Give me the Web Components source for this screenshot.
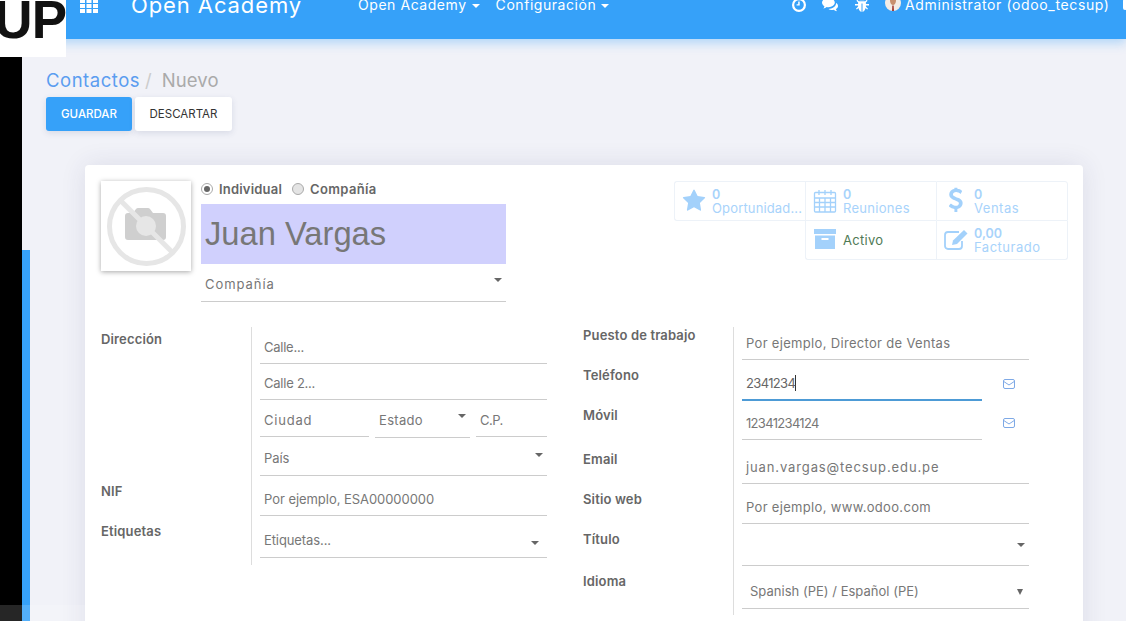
<!DOCTYPE html>
<html lang="es">
<head>
<meta charset="utf-8">
<title>Contactos / Nuevo</title>
<style>
  html, body { margin: 0; height: 621px; overflow: hidden; }
  body { font-family: Inter, "Noto Sans", sans-serif; font-size: 13px; color: #777; }
</style>
</head>
<body>
<x-app>
  <x-navbar slot="nav"></x-navbar>
  <x-breadcrumb slot="main"></x-breadcrumb>
  <x-toolbar slot="main"></x-toolbar>
  <x-sheet slot="main">
    <x-head>
      <x-photo slot="photo"></x-photo>
      <x-radios slot="title"></x-radios>
      <x-name slot="title">Juan Vargas</x-name>
      <x-field slot="title" style="height:38px;letter-spacing:.94px;padding-bottom:9px" caret="4" caret-y="14">Compañía</x-field>
      <x-stats slot="stats"></x-stats>
    </x-head>
    <x-form>
      <x-group slot="left" style="--tail:7px">
        <x-row label="Dirección" style="--lt:4px">
          <x-field style="height:37px;letter-spacing:-.25px">Calle...</x-field>
          <x-field style="height:36px;letter-spacing:-.24px">Calle 2...</x-field>
          <x-city></x-city>
          <x-field style="height:38px;letter-spacing:-.1px;padding-bottom:9px" caret="4" caret-y="15">País</x-field>
        </x-row>
        <x-row label="NIF" style="--lt:7px">
          <x-field style="height:40px;letter-spacing:-.05px">Por ejemplo, ESA00000000</x-field>
        </x-row>
        <x-row label="Etiquetas" style="--lt:7px">
          <x-field style="height:42px;letter-spacing:-.1px;padding-bottom:9px" caret="8" caret-y="25">Etiquetas...</x-field>
        </x-row>
      </x-group>
      <x-group slot="right" style="--tail:6px">
        <x-row label="Puesto de trabajo" style="--lt:0px">
          <x-field style="height:33px">Por ejemplo, Director de Ventas</x-field>
        </x-row>
        <x-row label="Teléfono" style="--lt:7px">
          <x-mail-line><x-field style="height:41px;letter-spacing:-.65px" active>2341234</x-field></x-mail-line>
        </x-row>
        <x-row label="Móvil" style="--lt:6px">
          <x-mail-line><x-field style="height:39px;letter-spacing:-.68px">12341234124</x-field></x-mail-line>
        </x-row>
        <x-row label="Email" style="--lt:11px">
          <x-field style="height:44px;letter-spacing:.88px">juan.vargas@tecsup.edu.pe</x-field>
        </x-row>
        <x-row label="Sitio web" style="--lt:7px">
          <x-field style="height:40px">Por ejemplo, www.odoo.com</x-field>
        </x-row>
        <x-row label="Título" style="--lt:7px">
          <x-field style="height:42px" caret="4" caret-y="19"></x-field>
        </x-row>
        <x-row label="Idioma" style="--lt:7px">
          <x-field style="height:43px;letter-spacing:.02px;padding-bottom:9px" indent tall>Spanish (PE) / Español (PE)</x-field>
        </x-row>
      </x-group>
    </x-form>
  </x-sheet>
</x-app>

<script>
const FA = {
  star: 'M1728 647q0 22-26 48l-363 354 86 500q1 7 1 20 0 21-10.5 35.5t-30.5 14.5q-19 0-40-12l-449-236-449 236q-22 12-40 12-21 0-31.5-14.5t-10.5-35.5q0-6 2-20l86-500-364-354q-25-27-25-48 0-37 56-46l502-73 225-455q19-41 49-41t49 41l225 455 502 73q56 9 56 46z',
  usd: 'M1158 1043q0 153-99.5 263.5t-258.5 136.5v175q0 14-9 23t-23 9h-135q-13 0-22.5-9.5t-9.5-22.5v-175q-66-9-127.5-31t-101.5-44.5-74-48-46.5-37.5-17.5-18q-17-21-2-41l103-135q7-10 23-12 15-2 24 9l2 2q113 99 243 125 37 8 74 8 81 0 142.5-43t61.5-122q0-28-15-53t-33.5-42-58.5-37.5-66-32-80-32.5q-39-16-61.5-25t-61.5-26.5-62.5-31-56.5-35.5-53.5-42.5-43.5-49-35.5-58-21-66.5-8.5-78q0-138 98-242t255-134v-180q0-13 9.5-22.5t22.5-9.5h135q14 0 23 9t9 23v176q57 6 110.5 23t87 33.5 63.5 37.5 39 29 15 14q17 18 5 38l-81 146q-8 15-23 16-14 3-27-7-3-3-14.5-12t-39-26.5-58.5-32-74.5-26-85.5-11.5q-95 0-155 43t-60 111q0 26 8.5 48t29.5 41.5 39.5 33 56 31 60.5 27 70 27.5q53 20 81 31.5t76 35 75.5 42.5 62 50 53 63.5 31.5 76.5 13 94z'
};

// small helper, every element here is the same shape: a shadow root with fixed markup
function define(name, html) {
  customElements.define(name, class extends HTMLElement {
    connectedCallback() {
      if (this.shadowRoot) return;
      this.attachShadow({ mode: 'open' }).innerHTML = typeof html === 'function' ? html(this) : html;
    }
  });
}

define('x-app', `
  <style>
    :host { display: grid; grid-template-rows: 39px 1fr; height: 621px; position: relative; overflow: hidden; background: #f1f2f8; }
    .body { display: flex; min-height: 0; }
    .black { width: 22px; background: #000; flex: none; }
    .strip { width: 8px; margin-top: 211px; background: #36a1f9; flex: none; }
    main { flex: 1; min-width: 0; padding: 28px 43px 0 16px; }
    .logo { position: absolute; left: 0; top: 0; width: 66px; height: 57px; background: #fff; overflow: hidden; z-index: 3; }
    .logo span { position: absolute; right: 0; top: -10px; font: 700 53px/60px "Liberation Sans", sans-serif; letter-spacing: -1px; color: #111; }
    .veil { position: absolute; left: 0; top: 605px; width: 232px; height: 16px; background: rgba(255,255,255,.15); z-index: 3; }
  </style>
  <slot name="nav"></slot>
  <div class="body">
    <div class="black"></div>
    <div class="strip"></div>
    <main><slot name="main"></slot></main>
  </div>
  <div class="logo"><span>UP</span></div>
  <div class="veil"></div>
`);

define('x-navbar', `
  <style>
    :host { display: block; height: 39px; background: #36a1f9; box-shadow: 0 4px 10px rgba(54,161,249,.35); position: relative; z-index: 2; color: #fff; }
    .row { display: flex; align-items: center; height: 9px; padding-left: 80px; font-size: 14px; white-space: nowrap; }
    .brand { font-size: 22px; margin: 0 56px 0 33px; letter-spacing: .9px; }
    .menu { margin-right: 16px; letter-spacing: .55px; }
    .menu i { display: inline-block; margin-left: 5px; vertical-align: 2px; border: 4px solid transparent; border-top-color: #fff; border-bottom: 0; }
    .right { position: absolute; left: 792px; top: 0; display: flex; align-items: center; height: 9px; font-size: 14px; white-space: nowrap; }
    svg { display: block; fill: #fff; flex: none; }
    .user { letter-spacing: .63px; margin-left: 4px; }
    .more { position: absolute; left: 331px; top: -1px; width: 4px; height: 11px; background: #fff; border-radius: 2px; }
  </style>
  <div class="row">
    <svg width="18" height="14" viewBox="0 0 18 14" style="margin-top:2px"><path d="M0 0h5v4H0zM6.5 0h5v4h-5zM13 0h5v4h-5zM0 5h5v4H0zM6.5 5h5v4h-5zM13 5h5v4h-5zM0 10h5v4H0zM6.5 10h5v4h-5zM13 10h5v4h-5z"/></svg>
    <span class="brand">Open Academy</span>
    <span class="menu">Open Academy<i></i></span>
    <span class="menu">Configuración<i></i></span>
  </div>
  <div class="right">
    <svg width="14" height="14" viewBox="0 0 14 14" style="margin-right:16px"><path fill-rule="evenodd" d="M7 0a7 7 0 1 1 0 14A7 7 0 0 1 7 0zm0 2.2a4.8 4.8 0 1 0 0 9.6 4.8 4.8 0 0 0 0-9.6z"/><path d="M6.2 3.6h1.5v4H4.6V6.2h1.6z"/></svg>
    <svg width="16" height="14" viewBox="0 0 16 14" style="margin-right:17px"><path d="M6.5 0C10 0 12.8 2 12.8 4.6S10 9.2 6.5 9.2c-.7 0-1.2 0-1.8-.2C3.800 9.700 2.700 10.200 1.300 10.400c.6-.7 1-1.400 1.100-2.200C.9 7.400 0 6.100 0 4.600 0 2 2.900 0 6.500 0z"/><path d="M14.100 5c1.200.7 1.900 1.800 1.900 3 0 1.300-.8 2.400-2.100 3.100.1.700.5 1.400 1.100 2.100-1.300-.2-2.500-.7-3.300-1.400-.5.1-1 .2-1.600.2-1.400 0-2.700-.4-3.600-1.100 3.700-.1 7.600-2 7.600-5.900z"/></svg>
    <svg width="14" height="14" viewBox="0 0 14 14" style="margin-right:16px"><path d="M4.500 2.300C4.800 1 5.800 0 7 0s2.200 1 2.500 2.300zM3.800 3.300h6.400l1.500-1.500.9.900L10.900 4.400v1.700H14v1.300h-3.100v1.100L13 10.700l-.9.900-1.500-1.500C10 12.300 8.800 14 7.500 14V5.500h-1V14c-1.300 0-2.500-1.700-3.100-3.900l-1.500 1.500-.9-.9 2.100-2.200V7.400H0V6.100h3.100V4.400L1.400 2.700l.9-.9z"/></svg>
    <svg width="16" height="16" viewBox="0 0 16 16" style="margin-top:-3px"><circle cx="8" cy="8" r="8" fill="#f3ece6"/><path d="M5 5.500C5 3 6.500 1.500 8 1.500S11 3 11 5.500 9.600 10 8 10 5 8 5 5.500z" fill="#c8906f"/><path d="M5 4.500C5.500 2 7 1 8 1s2.500 1 3 3.500c-1-.8-5-.8-6 0z" fill="#8a6350"/><path d="M7.300 10.500h1.400L9 16H7z" fill="#a33a32"/></svg>
    <span class="user">Administrator (odoo_tecsup)</span>
    <span class="more"></span>
  </div>
`);

define('x-breadcrumb', `
  <style>
    :host { display: flex; height: 26px; line-height: 26px; font-size: 18.5px; white-space: nowrap; }
    a { color: #5b9df0; letter-spacing: .52px; }
    .sep { color: #ccc; margin: 0 10px 0 5px; }
    .cur { color: #aaa; letter-spacing: .1px; }
  </style>
  <a>Contactos</a><span class="sep">/</span><span class="cur">Nuevo</span>
`);

define('x-toolbar', `
  <style>
    :host { display: flex; gap: 3px; margin-top: 4px; height: 34px; }
    button { font: 11.5px Inter, sans-serif; border: 0; border-radius: 3px; padding: 0 0 1px; box-shadow: 0 2px 6px rgba(60,70,120,.14); }
    .go { width: 86px; background: #36a1f9; color: #fff; font-weight: 500; }
    .no { width: 97px; background: #fff; color: #333; }
  </style>
  <button class="go">GUARDAR</button><button class="no">DESCARTAR</button>
`);

define('x-sheet', `
  <style>
    :host { display: block; box-sizing: border-box; margin: 34px 0 0 39px; height: 600px; padding: 16px 15px 0 16px; background: #fff; border-radius: 4px; box-shadow: 0 0 26px rgba(50,50,100,.11); }
  </style>
  <slot></slot>
`);

define('x-head', `
  <style>
    :host { display: flex; height: 121px; }
    .title { width: 305px; margin-left: 10px; display: flex; flex-direction: column; }
    .stats { margin-left: auto; }
  </style>
  <slot name="photo"></slot>
  <div class="title"><slot name="title"></slot></div>
  <div class="stats"><slot name="stats"></slot></div>
`);

define('x-photo', `
  <style>
    :host { display: block; width: 90px; height: 90px; flex: none; background: #fff; box-shadow: 0 1px 5px rgba(0,0,0,.35); }
    svg { display: block; }
  </style>
  <svg width="90" height="90" viewBox="0 0 90 90">
    <path fill="#cfcfcf" d="M24 35c0-2 1-3 3-3h5l3-4c.5-.7 1.200-1 2-1h10c.8 0 1.500.3 2 1l3 4h10c2 0 3 1 3 3v21c0 2-1 3-3 3H27c-2 0-3-1-3-3z"/>
    <circle cx="45" cy="45" r="10" fill="#e6e6e6"/>
    <circle cx="45.500" cy="45.500" r="37" fill="none" stroke="#e6e6e6" stroke-width="5"/>
    <path d="M19 19l53 53" stroke="#e6e6e6" stroke-width="5"/>
  </svg>
`);

define('x-radios', `
  <style>
    :host { display: flex; align-items: center; height: 23px; padding-bottom: 8px; box-sizing: border-box; font-weight: 600; font-size: 13px; color: #666; white-space: nowrap; }
    i { width: 12px; height: 12px; box-sizing: border-box; border-radius: 50%; border: 1px solid #aaa; background: #e4e4e4; margin-right: 6px; display: flex; align-items: center; justify-content: center; }
    .on { background: #fff; }
    .on::after { content: ""; width: 6px; height: 6px; border-radius: 50%; background: #666; }
    span { margin-right: 10px; letter-spacing: .2px; }
    span.b { letter-spacing: .35px; }
  </style>
  <i class="on"></i><span>Individual</span><i></i><span class="b">Compañía</span>
`);

define('x-name', `
  <style>
    :host { display: block; height: 60px; background: #d0d0fd; padding-left: 4px; font: 32.7px/60px "Liberation Sans", sans-serif; color: #777; flex: none; }
  </style>
  <slot></slot>
`);

define('x-field', el => {
  const caret = el.getAttribute('caret');
  const y = el.getAttribute('caret-y');
  const tall = el.hasAttribute('tall');
  return `
  <style>
    :host { display: flex; align-items: flex-end; position: relative; box-sizing: border-box; border-bottom: 1px solid #ccc; padding: 0 0 8px 4px; line-height: 16px; font-size: 13px; color: #777; letter-spacing: .32px; white-space: nowrap; flex: none; }
    :host([active]) { border-bottom: 2px solid #4d9bd6; padding-bottom: 8px; color: #666; }
    :host([active]) .t { border-right: 1px solid #333; }
    :host([indent]) { padding-left: 8px; }
    .c { position: absolute; right: ${caret || 0}px; top: ${y || 0}px; width: 0; height: 0; border: 4px solid transparent; border-top-color: #666; border-bottom: 0; }
    .tall { position: absolute; right: 6px; top: 23px; border: 3px solid transparent; border-top: 6px solid #666; border-bottom: 0; }
  </style>
  <span class="t"><slot></slot></span>
  ${caret ? '<i class="c"></i>' : ''}${tall ? '<i class="tall"></i>' : ''}`;
});

define('x-city', `
  <style>
    :host { display: flex; gap: 6px; height: 38px; align-items: flex-start; }
    x-field { flex: none; }
  </style>
  <x-field style="width:109px;height:37px;letter-spacing:.8px">Ciudad</x-field>
  <x-field style="width:95px;height:38px;padding-bottom:9px" caret="4" caret-y="14">Estado</x-field>
  <x-field style="width:71px;height:37px;letter-spacing:-.5px">C.P.</x-field>
`);

define('x-mail-line', `
  <style>
    :host { display: flex; align-items: flex-end; }
    ::slotted(x-field) { width: 240px; }
    svg { margin: 0 0 12px 21px; flex: none; }
  </style>
  <slot></slot>
  <svg width="12" height="10" viewBox="0 0 12 10" fill="none" stroke="#7ea9e6" stroke-width="1"><rect x=".5" y=".5" width="11" height="9" rx="1.500"/><path d="M.8 2.500 6 6l5.200-3.500"/></svg>
`);

define('x-form', `
  <style>
    :host { display: grid; grid-template-columns: 446px 446px; column-gap: 36px; margin-top: 25px; }
  </style>
  <slot name="left"></slot><slot name="right"></slot>
`);

define('x-group', `
  <style>
    :host { display: block; }
    .tail { height: var(--tail); width: 150px; border-right: 1px solid #ddd; }
  </style>
  <slot></slot><div class="tail"></div>
`);

define('x-row', el => `
  <style>
    :host { display: grid; grid-template-columns: 150px 296px; }
    label { padding-top: var(--lt); line-height: 16px; font-weight: 600; font-size: 13px; letter-spacing: .15px; color: #666; white-space: nowrap; }
    .v { box-sizing: border-box; border-left: 1px solid #ddd; padding-left: 8px; display: flex; flex-direction: column; }
  </style>
  <label>${el.getAttribute('label')}</label>
  <div class="v"><slot></slot></div>
`);

define('x-stats', `
  <style>
    :host { display: grid; grid-template-columns: 131px 131px 132px; grid-template-rows: 40px 39px; width: 394px; }
  </style>
  <x-stat num="0" text="Oportunidad..." style="border-right:0;border-radius:3px 0 0 3px;--ls:.15px">
    <svg width="24" height="24" viewBox="0 0 1792 1792" fill="#a3d1fb"><path d="${FA.star}"/></svg>
  </x-stat>
  <x-stat num="0" text="Reuniones" style="border-right:0">
    <svg width="24" height="24" viewBox="0 0 24 24" fill="none" stroke="#a3d1fb" stroke-width="1.300"><rect x="1.500" y="3.500" width="21" height="19.500" rx="1"/><path d="M1.500 9h21M1.500 13.500h21M1.500 18h21M6.500 9v14M12 9v14M17.500 9v14M6 1v5M18 1v5M12 1v5" /></svg>
  </x-stat>
  <x-stat num="0" text="Ventas" style="border-radius:0 3px 0 0;--ls:.5px">
    <svg width="24" height="24" viewBox="0 0 1280 1792" fill="#a3d1fb" preserveAspectRatio="xMidYMid meet" style="transform:translateX(-1px) scale(1.100)"><path d="${FA.usd}"/></svg>
  </x-stat>
  <div></div>
  <x-stat plain text="Activo" style="border-right:0;border-top:0;border-radius:0 0 0 3px">
    <svg width="24" height="24" viewBox="0 0 24 24" fill="#a3d1fb"><path d="M1 1h22v5H1zM2 7.500h20V21H2zM8.500 10v2h7v-2z" fill-rule="evenodd"/></svg>
  </x-stat>
  <x-stat num="0,00" text="Facturado" style="border-top:0;border-radius:0 0 3px 0;--ls:.5px">
    <svg width="24" height="24" viewBox="0 0 24 24" fill="none" stroke="#a3d1fb" stroke-width="1.800"><path d="M18 13v5a3 3 0 0 1-3 3H4a3 3 0 0 1-3-3V7a3 3 0 0 1 3-3h11"/><path d="M8 17l1-4.500L20 2l3.500 3.500L13 16z" fill="#a3d1fb" stroke="none"/></svg>
  </x-stat>
`);

define('x-stat', el => {
  const num = el.getAttribute('num');
  const text = el.getAttribute('text');
  return `
  <style>
    :host { display: flex; align-items: center; box-sizing: border-box; border: 1px solid #edf2f8; padding-left: 7px; gap: 6px; white-space: nowrap; overflow: hidden; }
    .i { width: 24px; height: 24px; flex: none; }
    ::slotted(svg) { display: block; }
    .t { display: flex; flex-direction: column; font-size: 13px; line-height: 14px; color: #a8d3fb; letter-spacing: var(--ls, .3px); }
    b { font-weight: 600; font-size: 12.5px; letter-spacing: 0; margin: 1px 0 -1px; }
    .plain { color: #4f7a55; }
  </style>
  <div class="i"><slot></slot></div>
  ${num === null ? `<div class="t plain">${text}</div>` : `<div class="t"><b>${num}</b><span>${text}</span></div>`}`;
});
</script>
</body>
</html>
